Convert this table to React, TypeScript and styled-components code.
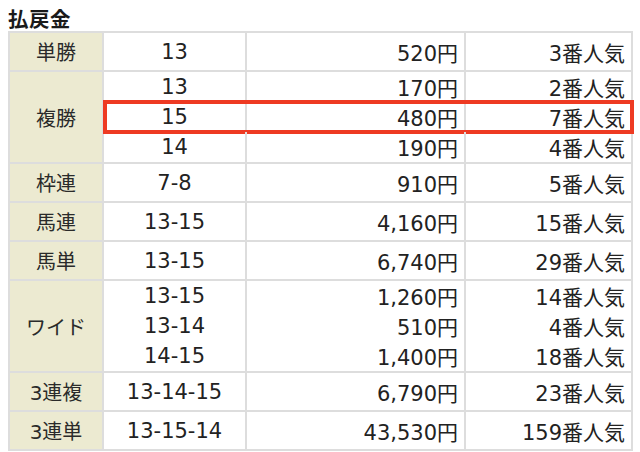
import React from "react";
import styled, { createGlobalStyle } from "styled-components";

const GlobalStyle = createGlobalStyle`
  html, body {
    margin: 0;
    padding: 0;
    background: #ffffff;
  }
  body {
    font-family: "DejaVu Sans", "Noto Sans CJK JP", sans-serif;
    color: #222222;
  }
`;

const Page = styled.div`
  width: 640px;
  height: 452px;
  padding: 6px 7px 0 8px;
  box-sizing: border-box;
  overflow: hidden;
`;

const Title = styled.h2`
  margin: 0;
  font-family: "Noto Sans CJK JP", sans-serif;
  font-size: 20.5px;
  line-height: 25px;
  font-weight: 700;
  letter-spacing: 0.5px;
  color: #1a1a1a;
`;

const Table = styled.div`
  width: 625px;
  border-top: 2px solid #dddddd;
  border-left: 2px solid #dddddd;
  border-right: 2px solid #dddddd;
  box-sizing: border-box;
`;

const Group = styled.div`
  display: flex;
  border-bottom: 2px solid #dddddd;
`;

const Label = styled.div`
  width: 92px;
  flex: none;
  display: flex;
  align-items: center;
  justify-content: center;
  background: #ecead1;
  border-right: 2px solid #dddddd;
  font-size: 20px;
  color: #2a2a2a;
`;

const Lines = styled.div`
  flex: 1;
  display: flex;
  flex-direction: column;
`;

const Line = styled.div<{ $h: number; $hit?: boolean }>`
  position: relative;
  display: grid;
  grid-template-columns: 143px 219px 1fr;
  height: ${(p) => p.$h}px;
  font-size: 21px;
  ${(p) =>
    p.$hit &&
    `
    &::after {
      content: "";
      position: absolute;
      top: -2px;
      bottom: -2px;
      left: -1px;
      right: -3px;
      border: 4px solid #ee3a22;
      pointer-events: none;
    }
  `}
`;

const Cell = styled.div<{ $align: "center" | "right"; $last?: boolean }>`
  display: flex;
  align-items: center;
  justify-content: ${(p) => (p.$align === "center" ? "center" : "flex-end")};
  padding-right: ${(p) => (p.$align === "right" ? "6px" : "0")};
  border-right: ${(p) => (p.$last ? "none" : "2px solid #dddddd")};
  box-sizing: border-box;
  white-space: nowrap;
`;

type Payout = {
  combo: string;
  yen: string;
  rank: number;
  hit?: boolean;
};

const payouts: { label: string; rows: Payout[] }[] = [
  { label: "単勝", rows: [{ combo: "13", yen: "520", rank: 3 }] },
  {
    label: "複勝",
    rows: [
      { combo: "13", yen: "170", rank: 2 },
      { combo: "15", yen: "480", rank: 7, hit: true },
      { combo: "14", yen: "190", rank: 4 },
    ],
  },
  { label: "枠連", rows: [{ combo: "7-8", yen: "910", rank: 5 }] },
  { label: "馬連", rows: [{ combo: "13-15", yen: "4,160", rank: 15 }] },
  { label: "馬単", rows: [{ combo: "13-15", yen: "6,740", rank: 29 }] },
  {
    label: "ワイド",
    rows: [
      { combo: "13-15", yen: "1,260", rank: 14 },
      { combo: "13-14", yen: "510", rank: 4 },
      { combo: "14-15", yen: "1,400", rank: 18 },
    ],
  },
  { label: "3連複", rows: [{ combo: "13-14-15", yen: "6,790", rank: 23 }] },
  { label: "3連単", rows: [{ combo: "13-15-14", yen: "43,530", rank: 159 }] },
];

const App: React.FunctionComponent = () => {
  return (
    <Page>
      <GlobalStyle />
      <Title>払戻金</Title>
      <Table>
        {payouts.map((g) => (
          <Group key={g.label}>
            <Label>{g.label}</Label>
            <Lines>
              {g.rows.map((r) => (
                <Line key={r.combo} $h={g.rows.length > 1 ? 30 : 37} $hit={r.hit}>
                  <Cell $align="center">{r.combo}</Cell>
                  <Cell $align="right">{r.yen}円</Cell>
                  <Cell $align="right" $last>
                    {r.rank}番人気
                  </Cell>
                </Line>
              ))}
            </Lines>
          </Group>
        ))}
      </Table>
    </Page>
  );
};

export default App;
